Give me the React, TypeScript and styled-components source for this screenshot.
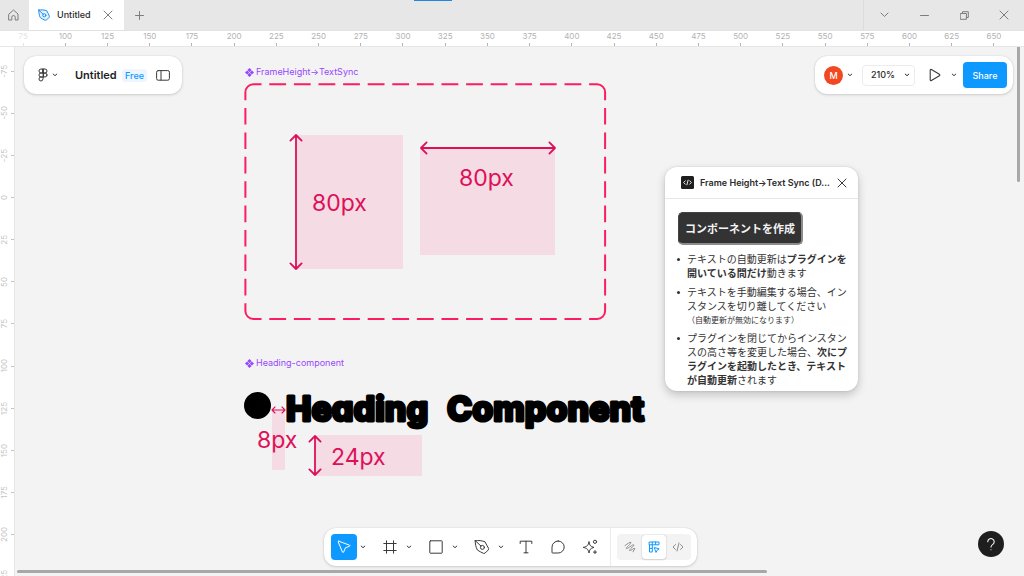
import React from "react";
import styled, { createGlobalStyle, css } from "styled-components";

const GlobalStyle = createGlobalStyle`
  *, *::before, *::after { box-sizing: border-box; }
  body {
    margin: 0;
    background: #f3f3f3;
    color: #2b2b2b;
    font-family: Inter, "Noto Sans CJK JP", sans-serif;
    overflow: hidden;
  }
  button, select { font: inherit; color: inherit; }
  svg { display: block; flex: none; }
`;

const PINK = "#dd1059";
const PINK_FILL = "#f5dbe4";
const BLUE = "#0d99ff";

/* ---------- window frame ---------- */

const Page = styled.div`
  height: 100vh;
  display: flex;
  flex-direction: column;
  overflow: hidden;
`;

const TitleBar = styled.header`
  position: relative;
  flex: none;
  display: flex;
  height: 31px;
  background: #e7e7e7;
  border-bottom: 1px solid #e2e2e2;
`;

const LoadingMark = styled.span`
  position: absolute;
  top: 0;
  left: calc(50% - 98px);
  width: 38px;
  height: 1px;
  background: #2186dc;
`;

const ChromeButton = styled.button<{ $width: number }>`
  display: grid;
  place-items: center;
  flex: none;
  width: ${(p) => p.$width}px;
  height: 30px;
  padding: 0;
  border: 0;
  background: none;
  color: #7d7d7d;
`;

const Tab = styled.div`
  display: flex;
  align-items: center;
  width: 95px;
  height: 30px;
  margin-left: 3px;
  padding: 0 7px 0 9px;
  gap: 7px;
  background: #fff;
  font-size: 9px;
  font-weight: 500;
  line-height: 12px;
`;

const TabTitle = styled.span`
  flex: 1;
`;

const WindowControls = styled.div`
  display: flex;
  margin-left: auto;
  border-left: 1px solid #dcdcdc;
`;

/* ---------- rulers ---------- */

const TopRuler = styled.div`
  flex: none;
  display: grid;
  grid-auto-flow: column;
  grid-auto-columns: 1fr;
  height: 16px;
  padding: 0 9px 0 2px;
  background: #fff;
  border-bottom: 1px solid #e6e6e6;
`;

const TopMark = styled.span<{ $faded?: boolean }>`
  display: flex;
  flex-direction: column;
  align-items: center;
  justify-content: space-between;
  font-size: 8px;
  line-height: 11px;
  color: ${(p) => (p.$faded ? "#e4e4e4" : "#b3b3b3")};
  &::after {
    content: "";
    width: 1px;
    height: 3px;
    background: ${(p) => (p.$faded ? "#e4e4e4" : "#b3b3b3")};
  }
`;

const Workspace = styled.div`
  flex: 1;
  min-height: 0;
  display: flex;
  overflow: hidden;
`;

const SideRuler = styled.div`
  flex: none;
  width: 15px;
  display: flex;
  background: #fff;
  border-right: 1px solid #e6e6e6;
`;

const SideMarks = styled.div`
  flex: 1;
  display: grid;
  grid-auto-rows: 1fr;
  margin: 3px 0 -22px;
`;

const SideMark = styled.span`
  display: flex;
  align-items: center;
  justify-content: space-between;
  &::after {
    content: "";
    width: 3px;
    height: 1px;
    background: #c4c4c4;
  }
`;

const SideLabel = styled.span`
  writing-mode: vertical-rl;
  transform: rotate(180deg);
  font-size: 8px;
  line-height: 8px;
  color: #c4c4c4;
`;

/* ---------- canvas ---------- */

const Canvas = styled.main`
  position: relative;
  flex: 1;
  min-width: 0;
  background: #f3f3f3;
  overflow: hidden;
`;

const Node = styled.div<{ $x: number; $y: number }>`
  position: absolute;
  left: ${(p) => p.$x}px;
  top: ${(p) => p.$y}px;
`;

const LayerName = styled(Node)`
  display: flex;
  align-items: center;
  gap: 2px;
  font-size: 9px;
  line-height: 12px;
  color: #9747ff;
  white-space: nowrap;
`;

const Block = styled(Node)<{ $w: number; $h: number }>`
  width: ${(p) => p.$w}px;
  height: ${(p) => p.$h}px;
  background: ${PINK_FILL};
`;

const Measure = styled(Node)`
  font-size: 23px;
  line-height: 30px;
  font-weight: 400;
  color: ${PINK};
  white-space: nowrap;
`;

const Bullet = styled(Node)`
  width: 27px;
  height: 27px;
  border-radius: 50%;
  background: #000;
`;

const Heading = styled(Node)`
  margin: 0;
  font-size: 34px;
  line-height: 40px;
  font-weight: 800;
  font-feature-settings: "cv11";
`;

const VerticalScroll = styled.div`
  position: absolute;
  top: 0;
  right: 4px;
  width: 3px;
  height: 135px;
  border-radius: 0 0 2px 2px;
  background: #a8a8a8;
`;

const HorizontalScroll = styled.div`
  position: absolute;
  left: 2px;
  right: 257px;
  bottom: 3px;
  height: 3px;
  border-radius: 2px;
  background: #a8a8a8;
`;

/* ---------- floating panels ---------- */

const panel = css`
  display: flex;
  align-items: center;
  height: 38px;
  background: #fff;
  border-radius: 12px;
  box-shadow: 0 0 1px rgba(0, 0, 0, 0.2), 0 1px 3px rgba(0, 0, 0, 0.15);
`;

const FilePanel = styled.div`
  ${panel}
  position: absolute;
  left: 9px;
  top: 9px;
  width: 158px;
  padding-left: 13px;
`;

const SharePanel = styled.div`
  ${panel}
  position: absolute;
  right: 11px;
  top: 9px;
  width: 198px;
  padding: 0 6px 0 9px;
`;

const IconButton = styled.button<{ $width?: number }>`
  display: grid;
  place-items: center;
  flex: none;
  width: ${(p) => p.$width ?? 26}px;
  height: 26px;
  padding: 0;
  border: 0;
  background: none;
  color: #3a3a3a;
`;

const MenuButton = styled(IconButton)`
  display: flex;
  align-items: center;
  justify-content: flex-start;
  gap: 3px;
`;

const CaretButton = styled(IconButton)`
  width: 6px;
  margin-left: 3px;
`;

const FileName = styled.span`
  margin-left: 12px;
  width: 47px;
  font-size: 11px;
  line-height: 16px;
  font-weight: 600;
  color: #1e1e1e;
  white-space: nowrap;
`;

const PlanBadge = styled.span`
  width: 25px;
  border-radius: 3px;
  background: #edf6ff;
  color: ${BLUE};
  font-size: 9px;
  line-height: 13px;
  font-weight: 500;
  text-align: center;
`;

const Avatar = styled.span`
  width: 19px;
  height: 19px;
  border-radius: 50%;
  background: #f24822;
  color: #fff;
  font-size: 9px;
  line-height: 19px;
  font-weight: 500;
  text-align: center;
`;

const ZoomField = styled.label`
  display: flex;
  align-items: center;
  width: 53px;
  height: 21px;
  margin-left: 6px;
  padding: 0 4px 0 8px;
  border: 1px solid #ececec;
  border-radius: 4px;
`;

const ZoomSelect = styled.select`
  flex: 1;
  min-width: 0;
  padding: 0;
  border: 0;
  appearance: none;
  background: none;
  font-size: 9px;
  line-height: 12px;
  font-weight: 500;
`;

const PlayButton = styled(IconButton)`
  margin-left: 7px;
`;

const ShareButton = styled.button`
  width: 44px;
  height: 26px;
  margin-left: auto;
  padding: 0;
  border: 0;
  border-radius: 4px;
  background: ${BLUE};
  color: #fff;
  font-size: 9px;
  font-weight: 500;
`;

const ToolDock = styled.div`
  position: absolute;
  left: 0;
  right: 18px;
  bottom: 10px;
  display: flex;
  justify-content: center;
`;

const ToolBar = styled.div`
  ${panel}
  width: 373px;
  padding: 0 6px 0 7px;
`;

const MenuTools = styled.div`
  display: flex;
  gap: 11px;
`;

const ToolGroup = styled.div`
  display: flex;
`;

const PlainTools = styled.div`
  display: flex;
  gap: 6px;
  margin-left: 9px;
`;

const Tool = styled(IconButton)<{ $active?: boolean }>`
  border-radius: 4px;
  background: ${(p) => (p.$active ? BLUE : "none")};
  color: ${(p) => (p.$active ? "#fff" : "#3a3a3a")};
`;

const ToolDivider = styled.span`
  width: 1px;
  align-self: stretch;
  margin: 0 6px 0 auto;
  background: #ebebeb;
`;

const ModeSwitch = styled.div`
  display: flex;
  align-items: center;
  height: 26px;
  padding: 0 1px;
  border-radius: 4px;
  background: #f3f3f3;
`;

const Mode = styled(IconButton)<{ $active?: boolean }>`
  width: 24px;
  height: 24px;
  border-radius: 3px;
  background: ${(p) => (p.$active ? "#fff" : "none")};
  box-shadow: ${(p) => (p.$active ? "0 0 1px rgba(0,0,0,.3), 0 1px 2px rgba(0,0,0,.12)" : "none")};
  color: ${(p) => (p.$active ? BLUE : "#8e8e8e")};
`;

const HelpButton = styled.button`
  position: absolute;
  right: 20px;
  bottom: 19px;
  display: grid;
  place-items: center;
  width: 26px;
  height: 26px;
  padding: 0;
  border: 0;
  border-radius: 50%;
  background: #1e1e1e;
  color: #f0f0f0;
`;

/* ---------- plugin window ---------- */

const PluginWindow = styled.section`
  position: absolute;
  left: 650px;
  top: 120px;
  width: 193px;
  height: 224px;
  border-radius: 12px;
  background: #fff;
  box-shadow: 0 0 2px rgba(0, 0, 0, 0.15), 0 4px 10px rgba(0, 0, 0, 0.2);
  overflow: hidden;
`;

const PluginHeader = styled.header`
  display: flex;
  align-items: center;
  height: 32px;
  padding: 0 11px 0 16px;
  border-bottom: 1px solid #e6e6e6;
`;

const PluginTitle = styled.h2`
  flex: 1;
  min-width: 0;
  margin: 0 2px 0 6px;
  font-size: 9px;
  line-height: 12px;
  font-weight: 600;
  color: #2b2b2b;
  white-space: nowrap;
`;

const PluginBody = styled.div`
  padding: 13px 8px 0 13px;
`;

const CreateButton = styled.button`
  display: block;
  width: 125px;
  height: 33px;
  padding: 0;
  border: 1px solid #8c8c8c;
  border-width: 1px 2px 2px 1px;
  border-top-color: #444;
  border-left-color: #444;
  border-radius: 5px;
  background: #333;
  color: #f4f4f4;
  font-family: "Noto Sans CJK JP", sans-serif;
  font-size: 11px;
  line-height: 16px;
  font-weight: 700;
`;

const Notes = styled.ul`
  display: grid;
  gap: 5px;
  margin: 7px 0 0;
  padding: 0;
  list-style: none;
  font-family: "Noto Sans CJK JP", sans-serif;
  font-size: 10px;
  line-height: 14px;
  color: #333;
  white-space: nowrap;
`;

const Note = styled.li`
  display: flex;
  gap: 7px;
  &::before {
    content: "";
    flex: none;
    width: 3px;
    height: 3px;
    margin: 6px 0 0 -1px;
    border-radius: 50%;
    background: #333;
  }
`;

const Remark = styled.small`
  display: block;
  font-size: 8px;
  line-height: 13px;
`;

/* ---------- icons ---------- */

type IconProps = { w: number; h: number; sw?: number; children: React.ReactNode };

const Icon = ({ w, h, sw = 1, children }: IconProps) => (
  <svg width={w} height={h} viewBox={`0 0 ${w} ${h}`} fill="none" stroke="currentColor"
    strokeWidth={sw} strokeLinecap="round" strokeLinejoin="round" aria-hidden="true">
    {children}
  </svg>
);

const Chevron = () => (
  <Icon w={6} h={4}><path d="M1.200 1.100l1.800 1.600 1.800-1.600" /></Icon>
);

const Cross = ({ size }: { size: number }) => (
  <Icon w={size} h={size}><path d={`M1 1L${size - 1} ${size - 1}M${size - 1} 1L1 ${size - 1}`} /></Icon>
);

const PenIcon = () => (
  <Icon w={16} h={16}>
    <path d="M1.200 1.800C4.500 1.200 8 1.600 11 2.800C12.400 5.200 13.200 7.400 14.600 9.400L14.400 10.800L11 14.200L9.600 14.400C7.400 13 5 12.600 3.400 11C1.800 8 1.200 4.800 1.200 1.800Z" />
    <circle cx="8.400" cy="8.400" r="2" />
    <path d="M1.400 1.800l5.500 5.200" />
  </Icon>
);

const TabPenIcon = () => (
  <svg width="12" height="12" viewBox="0 0 16 16" fill="#e3f2ff" stroke="#1b8cf0" strokeWidth="1.3"
    strokeLinecap="round" strokeLinejoin="round" aria-hidden="true">
    <path d="M1 1.500C5 .8 8.500 1.200 11.800 2.400C13.200 5 14 7.400 15.200 9.600L14.800 11.200L11.200 14.800L9.600 15C7.200 13.800 4.800 13 3 11.400C1.600 8.400 1 4.800 1 1.500Z" />
    <circle cx="8.400" cy="8.400" r="2.100" />
    <path d="M1.200 1.700l5.600 5.200" />
  </svg>
);

const ComponentIcon = () => (
  <svg width="9" height="9" viewBox="0 0 9 9" fill="#9747ff" aria-hidden="true">
    <path d="M4.500 0l2.100 2.100-2.100 2.100-2.100-2.100zM4.500 4.800l2.100 2.100L4.500 9 2.400 6.900zM2.100 2.400l2.100 2.100-2.100 2.100L0 4.500zM6.900 2.400L9 4.500 6.900 6.600 4.800 4.500z" />
  </svg>
);

const VerticalArrow = ({ h }: { h: number }) => (
  <svg width="14" height={h} viewBox={`0 0 14 ${h}`} fill="none" stroke={PINK} strokeWidth="1.800"
    strokeLinecap="round" strokeLinejoin="round" aria-hidden="true">
    <path d={`M7 1V${h - 1}M1.400 6.600L7 1l5.600 5.600M1.400 ${h - 6.6}L7 ${h - 1}l5.600 -5.600`} />
  </svg>
);

const HorizontalArrow = ({ w, head = 5.6, sw = 1.8 }: { w: number; head?: number; sw?: number }) => (
  <svg width={w} height="14" viewBox={`0 0 ${w} 14`} fill="none" stroke={PINK} strokeWidth={sw}
    strokeLinecap="round" strokeLinejoin="round" aria-hidden="true">
    <path d={`M1 7H${w - 1}M${1 + head} ${7 - head}L1 7l${head} ${head}M${w - 1 - head} ${7 - head}L${w - 1} 7l${-head} ${head}`} />
  </svg>
);

const DashedFrame = () => (
  <svg width="363" height="238" viewBox="0 0 363 238" fill="none" stroke="#fb1c62" strokeWidth="2" aria-hidden="true">
    <path d="M1.400 17.200V9.300a8 8 0 0 1 8-8h8.100M345.100 1.300h8a8 8 0 0 1 8 8v7.900M361.100 220.300v7.700a8 8 0 0 1-8 8h-8M17.500 236H9.400a8 8 0 0 1-8-8v-7.700" />
    <path d="M17.500 1.300H345M17.500 236H345" strokeDasharray="16.8 7.8" strokeDashoffset="16.8" />
    <path d="M1.400 17.200V220.300M361.100 17.200V220.300" strokeDasharray="16.6 7.8" strokeDashoffset="16.6" />
  </svg>
);

/* Rounded, heavy lettering: the outline stroke softens the corners. */
const RoundedTitle = () => (
  <svg width="372" height="46" viewBox="0 0 372 46" fill="#000" stroke="#000" strokeWidth="3"
    strokeLinejoin="round" strokeLinecap="round">
    <text x="0" y="32">Heading <tspan x="161">Component</tspan></text>
  </svg>
);

/* ---------- data ---------- */

const topMarks = Array.from({ length: 24 }, (_, i) => 75 + i * 25);
const sideMarks = Array.from({ length: 13 }, (_, i) => -75 + i * 25);

export default function App() {
  return (
    <Page>
      <GlobalStyle />
      <TitleBar>
        <ChromeButton $width={26} aria-label="Home">
          <Icon w={11} h={12}>
            <path d="M1 5L5.500 1 10 5v6H7.200V8.200a1.700 1.700 0 0 0-3.400 0V11H1Z" />
          </Icon>
        </ChromeButton>
        <Tab>
          <TabPenIcon />
          <TabTitle>Untitled</TabTitle>
          <ChromeButton $width={18} aria-label="Close tab"><Cross size={10} /></ChromeButton>
        </Tab>
        <ChromeButton $width={30} aria-label="New tab">
          <Icon w={9} h={9}><path d="M4.500 .5v8M.5 4.500h8" /></Icon>
        </ChromeButton>
        <LoadingMark />
        <WindowControls>
          <ChromeButton $width={40} aria-label="More"><Icon w={9} h={6}><path d="M1 1l3.500 3.500L8 1" /></Icon></ChromeButton>
          <ChromeButton $width={40} aria-label="Minimize"><Icon w={9} h={3}><path d="M.5 1.500h8" /></Icon></ChromeButton>
          <ChromeButton $width={40} aria-label="Restore">
            <Icon w={9} h={9}><path d="M.6 2.500h5.800v5.800H.6zM2.500 2.300V.7h5.800v5.800H6.600" /></Icon>
          </ChromeButton>
          <ChromeButton $width={40} aria-label="Close"><Cross size={10} /></ChromeButton>
        </WindowControls>
      </TitleBar>

      <TopRuler>
        {topMarks.map((n) => <TopMark key={n} $faded={n === 75}>{n}</TopMark>)}
      </TopRuler>

      <Workspace>
        <SideRuler>
          <SideMarks>
            {sideMarks.map((n) => <SideMark key={n}><SideLabel>{n}</SideLabel></SideMark>)}
          </SideMarks>
        </SideRuler>

        <Canvas>
          <LayerName $x={230} $y={19}><ComponentIcon />FrameHeight→TextSync</LayerName>
          <Node $x={229} $y={36}><DashedFrame /></Node>

          <Block $x={281} $y={88} $w={107} $h={134} />
          <Node $x={274} $y={87}><VerticalArrow h={136} /></Node>
          <Measure $x={297} $y={141}>80px</Measure>

          <Block $x={405} $y={102} $w={135} $h={106} />
          <Node $x={405} $y={94}><HorizontalArrow w={136} /></Node>
          <Measure $x={444} $y={116}>80px</Measure>

          <LayerName $x={230} $y={310}><ComponentIcon />Heading-component</LayerName>
          <Bullet $x={229} $y={345} />
          <Heading as="h1" $x={271} $y={342}><RoundedTitle /></Heading>
          <Block $x={257} $y={363} $w={13} $h={60} />
          <Node $x={256} $y={356}><HorizontalArrow w={15} head={3} sw={1.1} /></Node>
          <Measure $x={242} $y={378}>8px</Measure>

          <Block $x={300} $y={388} $w={107} $h={41} />
          <Node $x={293} $y={388}><VerticalArrow h={41} /></Node>
          <Measure $x={316} $y={395}>24px</Measure>

          <VerticalScroll />
          <HorizontalScroll />

          <FilePanel>
            <MenuButton aria-label="Main menu">
              <Icon w={12} h={14}>
                <path d="M6 1H4a2 2 0 0 0 0 4h2zM6 1h2a2 2 0 0 1 0 4H6zM6 5H4a2 2 0 0 0 0 4h2zM6 9H4a2 2 0 1 0 2 2z" />
                <circle cx="8" cy="7" r="2" />
              </Icon>
              <Chevron />
            </MenuButton>
            <FileName>Untitled</FileName>
            <PlanBadge>Free</PlanBadge>
            <IconButton $width={31} aria-label="Toggle sidebar">
              <Icon w={14} h={11}><rect x=".6" y=".6" width="12.800" height="9.600" rx="1.600" /><path d="M5 .8v9.200" /></Icon>
            </IconButton>
          </FilePanel>

          <SharePanel>
            <Avatar>M</Avatar>
            <IconButton $width={13} aria-label="Account"><Chevron /></IconButton>
            <ZoomField>
              <ZoomSelect aria-label="Zoom" defaultValue="210">
                <option value="210">210%</option>
                <option value="100">100%</option>
              </ZoomSelect>
              <Chevron />
            </ZoomField>
            <PlayButton aria-label="Present">
              <Icon w={12} h={14} sw={1.1}><path d="M1.200 2.200v9.600a.8.8 0 0 0 1.200.7l8-4.800a.8.8 0 0 0 0-1.400l-8-4.800a.8.8 0 0 0-1.200.7z" /></Icon>
            </PlayButton>
            <CaretButton aria-label="Present options"><Chevron /></CaretButton>
            <ShareButton>Share</ShareButton>
          </SharePanel>

          <PluginWindow aria-label="Plugin">
            <PluginHeader>
              <svg width="13" height="13" viewBox="0 0 13 13" fill="none" aria-hidden="true">
                <rect width="13" height="13" rx="1.500" fill="#1e1e1e" />
                <path d="M4.300 4.800L2.600 6.500l1.700 1.700M8.700 4.800l1.700 1.700-1.700 1.700M7.100 4.200L5.900 8.800" stroke="#fff" strokeWidth=".9" strokeLinecap="round" />
              </svg>
              <PluginTitle>Frame Height→Text Sync (D...</PluginTitle>
              <IconButton $width={10} aria-label="Close plugin"><Cross size={10} /></IconButton>
            </PluginHeader>
            <PluginBody>
              <CreateButton>コンポーネントを作成</CreateButton>
              <Notes>
                <Note><div>テキストの自動更新は<b>プラグインを<br />開いている間だけ</b>動きます</div></Note>
                <Note><div>テキストを手動編集する場合、イン<br />スタンスを切り離してください<Remark>（自動更新が無効になります）</Remark></div></Note>
                <Note><div>プラグインを閉じてからインスタン<br />スの高さ等を変更した場合、<b>次にプ<br />ラグインを起動したとき、テキスト<br />が自動更新</b>されます</div></Note>
              </Notes>
            </PluginBody>
          </PluginWindow>

          <ToolDock>
            <ToolBar>
              <MenuTools>
                <ToolGroup>
                  <Tool $active aria-label="Move">
                    <Icon w={16} h={16}><path d="M2.800 2.200L13.600 6.200q.9.500 0 1L9.400 8.800 7.600 13.200q-.6.800-1.100 0L2.200 2.900q-.1-.7.600-.7z" /></Icon>
                  </Tool>
                  <CaretButton aria-label="Move tools"><Chevron /></CaretButton>
                </ToolGroup>
                <ToolGroup>
                  <Tool aria-label="Frame">
                    <Icon w={14} h={14}><path d="M3.500 .8v12.400M10.500 .8v12.400M.8 3.500h12.400M.8 10.500h12.400" /></Icon>
                  </Tool>
                  <CaretButton aria-label="Frame tools"><Chevron /></CaretButton>
                </ToolGroup>
                <ToolGroup>
                  <Tool aria-label="Rectangle">
                    <Icon w={14} h={14}><rect x=".8" y=".8" width="12.400" height="12.400" rx=".6" /></Icon>
                  </Tool>
                  <CaretButton aria-label="Shape tools"><Chevron /></CaretButton>
                </ToolGroup>
                <ToolGroup>
                  <Tool aria-label="Pen"><PenIcon /></Tool>
                  <CaretButton aria-label="Drawing tools"><Chevron /></CaretButton>
                </ToolGroup>
              </MenuTools>
              <PlainTools>
                <Tool aria-label="Text">
                  <Icon w={14} h={14}><path d="M1.200 3.500V1.200h11.600v2.300M7 1.200v11.600M5 12.800h4" /></Icon>
                </Tool>
                <Tool aria-label="Comment">
                  <Icon w={14} h={14}><path d="M7.200 1a6 6 0 1 1 0 12H1.500a.5.5 0 0 1-.5-.5V7.200A6.100 6.100 0 0 1 7.200 1z" /></Icon>
                </Tool>
                <Tool aria-label="Actions">
                  <Icon w={16} h={16}>
                    <path d="M7 3C7.500 6.300 8.400 7.500 12 8.400C8.400 9.300 7.500 10.500 7 14C6.300 10.500 5.200 9.300 1.200 8.400C5.200 7.500 6.300 6.300 7 3Z" />
                    <circle cx="13" cy="2.800" r="1.600" />
                    <path d="M13 11.600v3M11.500 13.100h3" />
                  </Icon>
                </Tool>
              </PlainTools>
              <ToolDivider />
              <ModeSwitch>
                <Mode aria-label="Draw">
                  <Icon w={12} h={12}><path d="M1 4.600C3.500 2.600 6.400 .8 7 1.500S1.600 6.700 2.300 7.600 9 2.900 9.800 3.800 4.800 8.700 5.500 9.600 10 6.600 10.800 7.300 8.600 9.700 9 10.800" /></Icon>
                </Mode>
                <Mode $active aria-label="Design">
                  <Icon w={12} h={12}>
                    <path d="M1.500 1h9.500v2.800H1.500zM1.500 3.800V11h2.800V1M7.600 1v2.500M1.500 7.400h2.500" />
                    <path d="M6.600 6.600l4.600 1.300-2 1.200-1 2z" />
                  </Icon>
                </Mode>
                <Mode aria-label="Dev mode">
                  <Icon w={12} h={10}><path d="M3.500 2.500L1 5l2.500 2.500M8.500 2.500L11 5 8.500 7.500M7 1L5 9" /></Icon>
                </Mode>
              </ModeSwitch>
            </ToolBar>
          </ToolDock>

          <HelpButton aria-label="Help">
            <Icon w={10} h={13} sw={1.1}>
              <path d="M1.800 3.800a3.200 3.200 0 1 1 5 2.600C5.600 7.200 5 7.700 5 9.100M5 11.700v.1" />
            </Icon>
          </HelpButton>
        </Canvas>
      </Workspace>
    </Page>
  );
}
